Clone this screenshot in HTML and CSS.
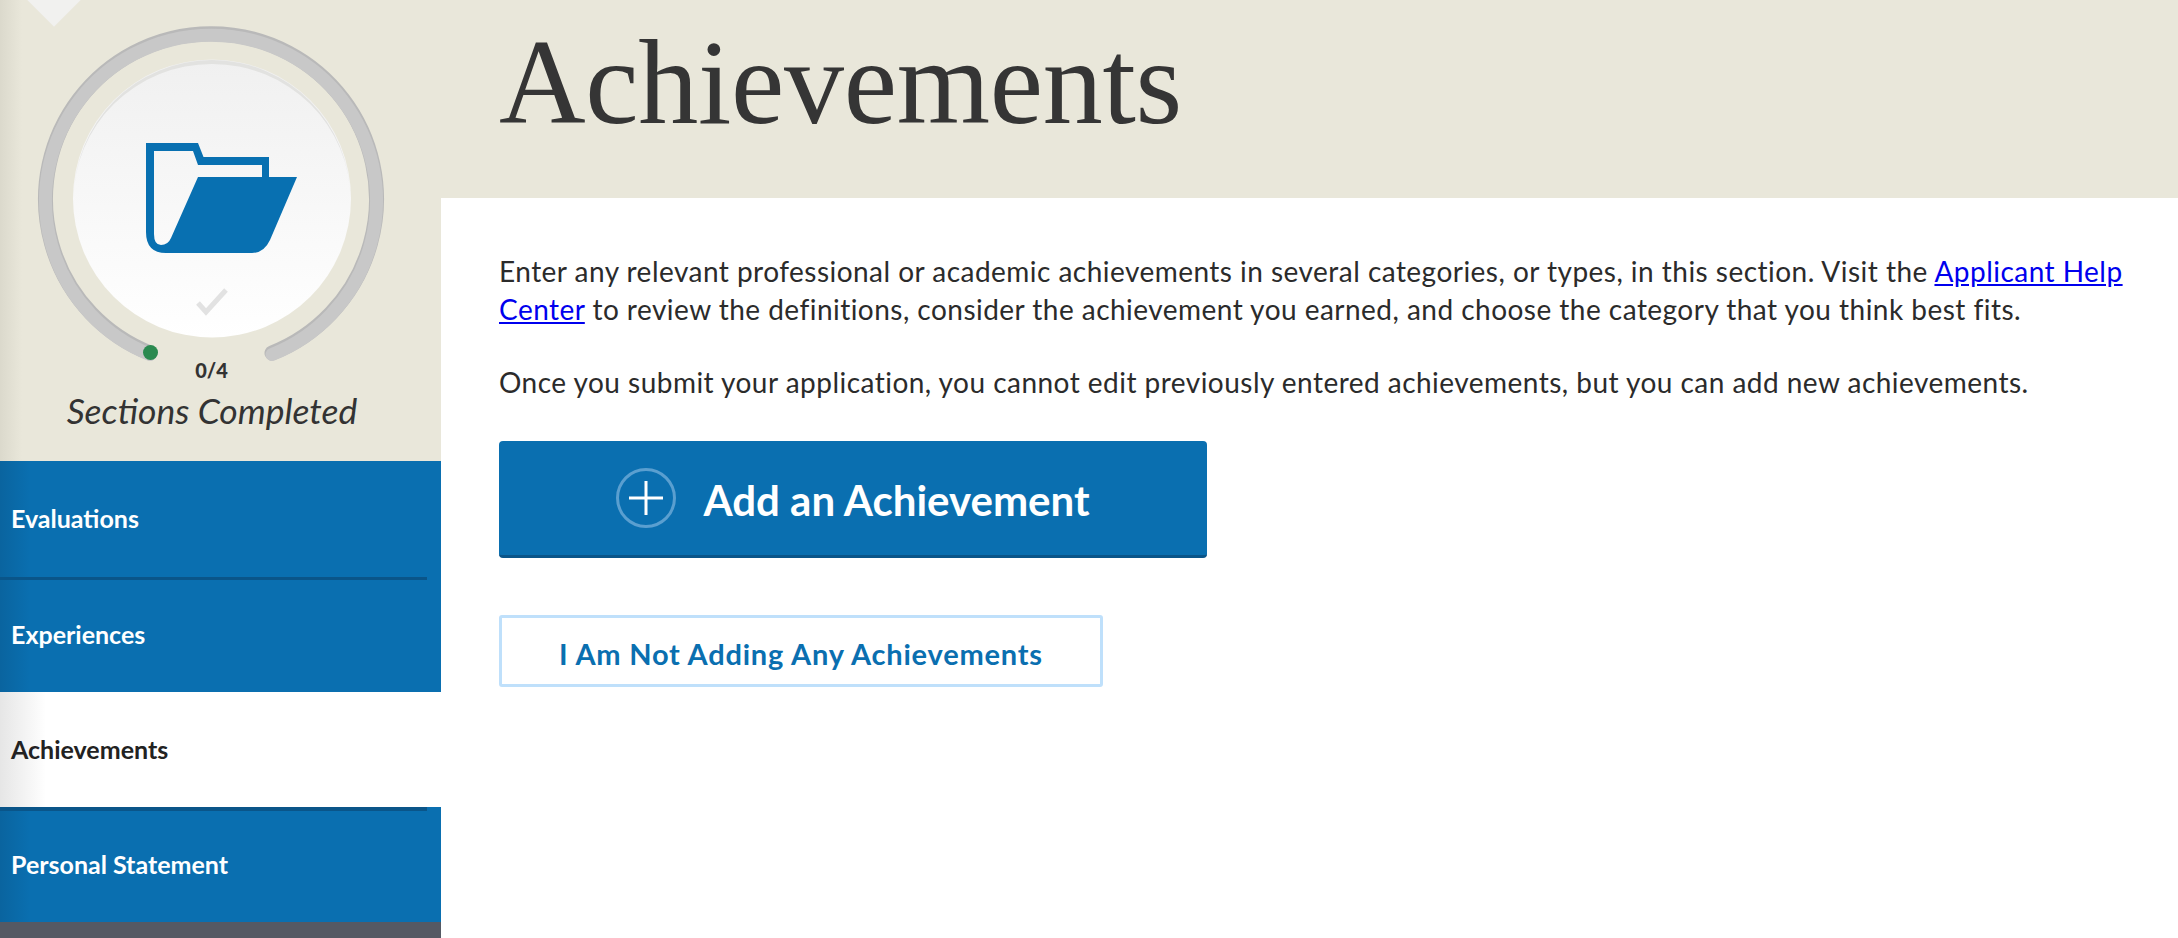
FILE: index.html
```html
<!DOCTYPE html>
<html lang="en">
<head>
  <meta charset="UTF-8">
  <title>Achievements</title>
  <link rel="stylesheet" href="styles.css">
</head>
<body>
  <div class="layout">
    <aside class="sidebar">
      <div class="progress">
        <div class="notch"></div>
        <svg class="dial" width="441" height="352" viewBox="0 0 441 352">
          <defs>
            <linearGradient id="disc-fill" x1="0" y1="0" x2="0" y2="1">
              <stop offset="0" stop-color="#f0f0f0"/>
              <stop offset="1" stop-color="#ffffff"/>
            </linearGradient>
          </defs>
          <path class="ring-edge" d="M150 353 A165.500 165.500 0 1 1 272 353"/>
          <path class="ring" d="M150 354.500 A165.500 165.500 0 1 1 272 354.500"/>
          <circle class="disc" cx="212" cy="198.500" r="139" fill="url(#disc-fill)"/>
          <path class="disc-edge" d="M73.500 200A138.500 140 0 0 1 350.500 200A138.500 136 0 0 0 73.500 200Z"/>
          <path class="folder" fill-rule="evenodd" d="M146 143H198L203.500 157H269V177H297L270 240Q264 253 252 253H166Q146 253 146 232ZM154 151V234Q154 245 161 245Q168 245 171 238L198 177H262V165H198L193 151Z"/>
          <path class="check" d="M198 303L206 312L226 290"/>
          <circle class="dot" cx="150.500" cy="352.500" r="7.500"/>
        </svg>
        <div class="count">0/4</div>
        <div class="caption">Sections Completed</div>
      </div>
      <nav class="nav">
        <a class="nav-item">Evaluations</a>
        <a class="nav-item nav-line">Experiences</a>
        <a class="nav-item active">Achievements</a>
        <a class="nav-item nav-line thick">Personal Statement</a>
      </nav>
      <div class="sidebar-foot"></div>
    </aside>
    <main class="main">
      <header class="page-head">
        <h1>Achievements</h1>
      </header>
      <section class="content">
        <p>Enter any relevant professional or academic achievements in several categories, or types, in this section. Visit the <a href="#">Applicant Help Center</a> to review the definitions, consider the achievement you earned, and choose the category that you think best fits.</p>
        <p>Once you submit your application, you cannot edit previously entered achievements, but you can add new achievements.</p>
        <button class="btn-add">
          <svg width="60" height="60" viewBox="0 0 60 60">
            <circle class="plus-ring" cx="30" cy="30" r="28.500"/>
            <path class="plus" d="M30 13V47M13 30H47"/>
          </svg>
          <span class="btn-label">Add an Achievement</span>
        </button>
        <button class="btn-none"><span class="btn-label">I Am Not Adding Any Achievements</span></button>
      </section>
    </main>
  </div>
</body>
</html>
```

FILE: styles.css
```css
* {
  box-sizing: border-box;
}
html, body {
  height: 100%;
}
body {
  margin: 0;
  overflow: hidden;
  font-family: Lato, "Liberation Sans", sans-serif;
  background: #ffffff;
  color: #2b2b2b;
}
.layout {
  display: grid;
  grid-template-columns: 441px 1fr;
  height: 938px;
}

/* sidebar */
.sidebar {
  display: flex;
  flex-direction: column;
  background: #e9e7da;
}
.progress {
  position: relative;
  height: 461px;
  background: linear-gradient(90deg, #dbd9cc, #e9e7da 22px);
}
.notch {
  position: absolute;
  top: -32px;
  left: 31px;
  width: 46px;
  height: 46px;
  background: #f1f1ef;
  transform: rotate(45deg) scale(1.1);
}
.dial {
  display: block;
  overflow: visible;
  position: relative;
}
.ring-edge, .ring {
  fill: none;
  stroke-linecap: round;
}
.ring-edge {
  stroke: #b9b9b9;
  stroke-width: 15px;
}
.ring {
  stroke: #c8c8c8;
  stroke-width: 13px;
}
.disc-edge {
  fill: #e2e2e0;
}
.folder {
  fill: #0870b1;
}
.check {
  fill: none;
  stroke: #e2e2e2;
  stroke-width: 5px;
}
.dot {
  fill: #2b8a50;
}
.count {
  margin-top: 5px;
  padding-right: 18px;
  text-align: center;
  font-size: 20px;
  line-height: 26px;
  font-weight: 900;
  color: #333333;
}
.caption {
  margin-top: 6px;
  padding-right: 17px;
  text-align: center;
  font-size: 35.500px;
  line-height: 44px;
  font-style: italic;
  color: #333333;
}
.nav {
  display: flex;
  flex-direction: column;
}
.nav-item {
  position: relative;
  display: flex;
  align-items: center;
  height: 115px;
  padding: 0 0 2px 11px;
  font-size: 25px;
  font-weight: 700;
  color: #ffffff;
  background: linear-gradient(90deg, #0a649f, #0a6fb0 30px);
}
.nav-item:first-child {
  height: 116px;
}
.nav-line::before {
  content: "";
  position: absolute;
  top: 0;
  left: 0;
  width: 427px;
  height: 3px;
  background: #0a5589;
}
.nav-line.thick::before {
  height: 4px;
}
.nav-item.active {
  color: #222222;
  background: linear-gradient(90deg, #e6e6e6, #ffffff 46px);
}
.sidebar-foot {
  flex: 1;
  background: #555963;
}

/* main column */
.main {
  min-width: 0;
}
.page-head {
  height: 198px;
  padding-left: 58px;
  background: #e9e7da;
}
.page-head h1 {
  margin: 0;
  padding-top: 18px;
  font-family: "Liberation Serif", serif;
  font-size: 120px;
  line-height: 130px;
  font-weight: 400;
  letter-spacing: -0.300px;
  color: #353535;
}
.content {
  padding: 54px 40px 0 58px;
}
.content p {
  margin: 0 0 35px;
  font-size: 28px;
  line-height: 38px;
  letter-spacing: 0.470px;
  color: #2b2b2b;
}
.content a {
  color: #0000ee;
}
.btn-add, .btn-none {
  display: flex;
  align-items: center;
  justify-content: center;
  font-family: inherit;
  font-weight: 700;
}
.btn-label {
  padding-top: 4px;
}
.btn-add {
  gap: 27px;
  width: 708px;
  height: 117px;
  margin-top: 40px;
  border: 0;
  border-bottom: 3px solid #0a5589;
  border-radius: 4px;
  background: #0a6fb0;
  color: #ffffff;
  font-size: 42px;
}
.plus-ring {
  fill: none;
  stroke: #5a9fd0;
  stroke-width: 3px;
}
.plus {
  stroke: #ffffff;
  stroke-width: 3px;
}
.btn-none {
  width: 604px;
  height: 72px;
  margin-top: 57px;
  border: 3px solid #bfe0fb;
  border-radius: 3px;
  background: #ffffff;
  color: #0a6fb0;
  font-size: 29px;
  letter-spacing: 0.800px;
}
```
